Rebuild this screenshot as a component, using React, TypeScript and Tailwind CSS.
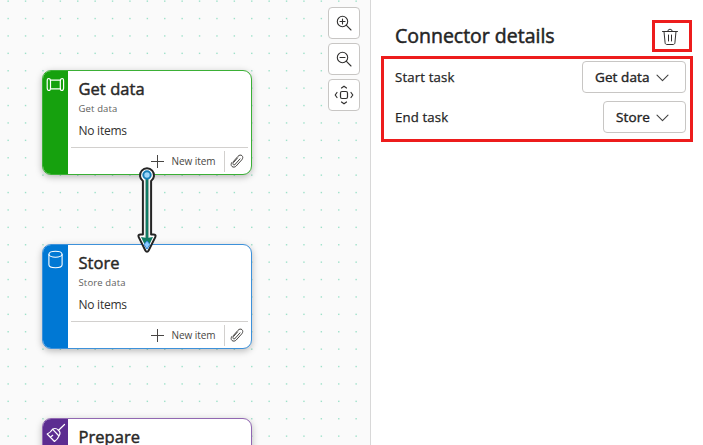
import type { ReactNode } from "react";

const COLUMNS = Array.from({ length: 22 }, (_, i) => 8.1 + i * 17.4);
const ROWS = Array.from({ length: 26 }, (_, i) => 1.1 + i * 17.4);

function DotGrid() {
  return (
    <svg className="absolute inset-0" width="370" height="445" fill="#5fd0a8" fillOpacity="0.6">
      {ROWS.map((y) => COLUMNS.map((x) => <rect key={`${x}-${y}`} x={x - 0.65} y={y - 0.65} width="1.4" height="1.4" />))}
    </svg>
  );
}

function PipeIcon() {
  return (
    <svg className="mt-[1px]" width="19" height="16" viewBox="0 0 19 16" fill="none" stroke="white" strokeWidth="1.2">
      <path d="M2.500 1.500c1.500 0 2 1 2 2.500v7c0 1.500-.5 2.500-1.500 2.500s-1.800-1-1.800-2.500V4c0-1.500.3-2.500 1.300-2.500ZM16.300 1.500c-1.500 0-2 1-2 2.500v7c0 1.500.5 2.500 1.500 2.500s1.800-1 1.800-2.500V4c0-1.500-.3-2.500-1.300-2.500Z" />
      <path d="M4.500 3.200h9.800M4.500 11.800h9.800" />
    </svg>
  );
}

function DatabaseIcon() {
  return (
    <svg width="19" height="19" viewBox="0 0 19 19" fill="none" stroke="white" strokeWidth="1.1">
      <ellipse cx="9.5" cy="4.2" rx="6.6" ry="3" />
      <path d="M2.9 4.2v10.6c0 1.7 3 3 6.6 3s6.6-1.3 6.6-3V4.2" />
    </svg>
  );
}

function BroomIcon() {
  return (
    <svg className="mt-[-1px]" width="20" height="20" viewBox="0 0 20 20" fill="none" stroke="white" strokeWidth="1.2" strokeLinejoin="round" strokeLinecap="round">
      <path d="M18.500 1.500 12.300 7.500M6.500 6.200 13 13c1.300-2 1.200-4.300-.5-5.900-1.700-1.600-4-2-6-.9ZM6.500 6.200C5.200 8.500 3.300 10 1.200 11l7.300 7.500c1.800-1.200 3.500-3 4.500-5.500M4.500 14.300l2.200-2" />
    </svg>
  );
}

function PaperclipIcon() {
  return (
    <svg width="14" height="14" viewBox="0 0 14 14" fill="none" stroke="#484644" strokeWidth="1" strokeLinecap="round">
      <path d="M3.300 7.600 8 2.300C9.200.9 10.900.7 12 1.700s1 2.700-.2 4.100L6.200 12C5 13.300 3.200 13.500 2 12.500S.8 9.600 2 8.300M5 10.500l5-5.600M5 10.500c-.5.500-1.200.5-1.700.1s-.5-1.200 0-1.800L7.500 4" />
    </svg>
  );
}

interface TaskCardProps {
  title: string;
  icon: ReactNode;
  frame: string;
  stripe: string;
  children?: ReactNode;
}

function TaskCard({ title, icon, frame, stripe, children }: TaskCardProps) {
  return (
    <div className={`absolute left-[42px] flex w-[210px] overflow-hidden rounded-[9px] border bg-white shadow-[0_2px_7px_rgba(0,0,0,0.27)] ${frame}`}>
      <div className={`flex w-[25px] shrink-0 justify-center pt-[5px] ${stripe}`}>{icon}</div>
      <div className="flex min-w-0 flex-1 flex-col">
        <h2 className="pt-[6px] pl-[10.500px] text-[16.500px] leading-[23px] font-normal tracking-[0.050px] whitespace-nowrap text-[#292827] [-webkit-text-stroke:0.45px_#292827]">{title}</h2>
        {children}
      </div>
    </div>
  );
}

function TaskCardBody({ subtitle }: { subtitle: string }) {
  return (
    <>
      <div className="h-[47px] pl-[10.500px]">
        <p className="mt-[1px] text-[9.500px] leading-[15px] tracking-[0.14px] text-[#605e5c]">{subtitle}</p>
        <p className="mt-[6px] text-[12px] leading-[18px] tracking-[-0.25px] text-[#323130]">No items</p>
      </div>
      <div className="mx-[3px] flex h-[27px] items-center border-t border-[#d2d0ce] text-[#484644]">
        <svg className="ml-[80px]" width="13" height="13" viewBox="0 0 13 13" stroke="#484644">
          <path d="M6.500 0v13M0 6.500h13" />
        </svg>
        <span className="ml-[7.500px] w-[52.500px] text-[10px] leading-[16px] tracking-[-0.05px] whitespace-nowrap">New item</span>
        <div className="h-[21px] border-l border-[#d2d0ce]" />
        <span className="ml-[5px]"><PaperclipIcon /></span>
      </div>
    </>
  );
}

function Connector() {
  return (
    <svg className="absolute top-[164px] left-[134px]" width="26" height="92" viewBox="0 0 26 92">
      <path
        d="M8.900 17A7 7 0 1 1 17.100 17V70.500h2.400c1.700 0 2.600 1 1.800 2.600L14.500 86.700c-.7 1.500-2.300 1.500-3 0L4.700 73.100c-.8-1.600.1-2.600 1.800-2.600h2.400Z"
        fill="white" stroke="#242424" strokeWidth="2" strokeLinejoin="round"
      />
      <path d="M13 14v60" stroke="#c8c6c4" strokeWidth="4.500" />
      <path d="M13 14v60" stroke="#107c65" strokeWidth="2.500" />
      <path d="M7 73 13 74l6-1L13 85.500Z" fill="#107c65" />
      <circle cx="13" cy="11" r="3.700" fill="#9ed6fa" stroke="#167fb8" strokeWidth="2" />
      <path d="m13 77 3 3.500-3 4.500-3-4.500Z" fill="#8dccff" stroke="#3488d8" strokeWidth="1" />
    </svg>
  );
}

function ZoomIcon({ plus }: { plus?: boolean }) {
  return (
    <svg width="16" height="16" viewBox="0 0 16 16" fill="none" stroke="#323130" strokeWidth="1.100" strokeLinecap="round">
      <circle cx="6.500" cy="6.500" r="5.200" />
      <path d={plus ? "m10.200 10.200 4.800 4.800M4 6.500h5M6.500 4v5" : "m10.200 10.200 4.800 4.800M4 6.500h5"} />
    </svg>
  );
}

function FitIcon() {
  return (
    <svg width="20" height="20" viewBox="0 0 20 20" fill="none" stroke="#323130" strokeWidth="1.200" strokeLinecap="round" strokeLinejoin="round">
      <rect x="6.500" y="6.500" width="7" height="7" rx="1.500" />
      <path d="M7.500 3 10 1.200 12.500 3M7.500 17l2.500 1.800 2.500-1.800M3 7.500 1.200 10 3 12.500M17 7.500l1.800 2.500-1.800 2.500" />
    </svg>
  );
}

function ToolButton({ children }: { children: ReactNode }) {
  return <button className="flex size-8 items-center justify-center rounded-[4px] border border-[#c8c6c4] bg-white">{children}</button>;
}

function TrashIcon() {
  return (
    <svg width="18" height="18" viewBox="0 0 18 18" fill="none" stroke="#323130" strokeWidth="1" strokeLinecap="round">
      <path d="M1.500 3.500h15M6.700 3.500a2.300 2.300 0 0 1 4.600 0M3 3.500l1.100 11.300c.1 1 .7 1.700 1.700 1.700h6.400c1 0 1.600-.7 1.700-1.700L15 3.500M7.500 7v6M10.500 7v6" />
    </svg>
  );
}

function DetailRow({ label, value, width }: { label: string; value: string; width: string }) {
  return (
    <div className="flex h-8 items-center justify-between">
      <span className="pt-[2px] text-[13.200px] tracking-[0.150px] [-webkit-text-stroke:0.25px_#242424]">{label}</span>
      <button className={`flex h-8 items-center justify-between rounded-[4px] border border-[#c8c6c4] bg-white pr-[16px] pl-[12px] text-[13.500px] font-normal tracking-[0.100px] [-webkit-text-stroke:0.4px_#242424] ${width}`}>
        <span className="pt-[1px]">{value}</span>
        <svg className="mt-[1px]" width="13" height="8" viewBox="0 0 13 8" fill="none" stroke="#424242" strokeWidth="1.100" strokeLinecap="round" strokeLinejoin="round">
          <path d="M1 1.200 6.500 6.700 12 1.200" />
        </svg>
      </button>
    </div>
  );
}

export default function App() {
  return (
    <div className="flex h-[445px] w-[703px] overflow-hidden bg-white font-['Open_Sans','Noto_Sans',sans-serif] text-[#242424]">
      <main className="relative h-full w-[371px] shrink-0 overflow-hidden border-r border-[#d8d8d8] bg-[#fafafa]">
        <DotGrid />
        <TaskCard title="Get data" icon={<PipeIcon />} frame="top-[70px] h-[105px] border-[#3bb036]" stripe="bg-[#16a10e]">
          <TaskCardBody subtitle="Get data" />
        </TaskCard>
        <TaskCard title="Store" icon={<DatabaseIcon />} frame="top-[244px] h-[105px] border-[#3d91da]" stripe="bg-[#0078d4]">
          <TaskCardBody subtitle="Store data" />
        </TaskCard>
        <TaskCard title="Prepare" icon={<BroomIcon />} frame="top-[418px] h-[105px] border-[#9168b2]" stripe="bg-[#5c2d91]" />
        <Connector />
        <div className="absolute top-[7px] left-[328px] flex flex-col gap-1">
          <ToolButton><ZoomIcon plus /></ToolButton>
          <ToolButton><ZoomIcon /></ToolButton>
          <ToolButton><FitIcon /></ToolButton>
        </div>
      </main>
      <aside className="flex flex-1 flex-col pt-[20px] pl-[10px]">
        <header className="flex h-8 items-center pr-[11px] pl-[14px]">
          <h1 className="flex-1 text-[19.500px] font-normal tracking-[-0.010px] [-webkit-text-stroke:0.5px_#242424]">Connector details</h1>
          <button className="flex h-8 w-[40px] items-center justify-center border-[3px] border-[#ed1c1c] pt-[1px] pr-[4px]"><TrashIcon /></button>
        </header>
        <section className="mt-[4px] flex h-[86px] w-[312px] flex-col gap-2 border-[3px] border-[#ed1c1c] pt-[2px] pr-[4px] pl-[11px]">
          <DetailRow label="Start task" value="Get data" width="w-[104px]" />
          <DetailRow label="End task" value="Store" width="w-[83px]" />
        </section>
      </aside>
    </div>
  );
}
